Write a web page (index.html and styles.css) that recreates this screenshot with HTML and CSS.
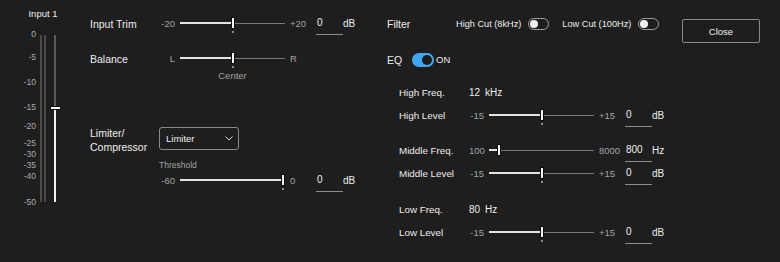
FILE: index.html
```html
<!DOCTYPE html>
<html lang="en">

<head>
    <meta charset="utf-8" />
    <title>Input 1</title>
    <link rel="stylesheet" href="styles.css">
</head>

<body>
    <div class="app">
        <section class="meter">
            <div class="meter-title">Input 1</div>
            <div class="meter-body">
                <div class="meter-scale">
                    <span style="top:-1px">0</span>
                    <span style="top:22px">-5</span>
                    <span style="top:47px">-10</span>
                    <span style="top:72px">-15</span>
                    <span style="top:91px">-20</span>
                    <span style="top:108px">-25</span>
                    <span style="top:119px">-30</span>
                    <span style="top:130px">-35</span>
                    <span style="top:141px">-40</span>
                    <span style="top:167px">-50</span>
                </div>
                <div class="meter-bar"></div>
                <div class="meter-bar"></div>
                <div class="fader">
                    <div class="fader-fill" style="height:56%"></div>
                    <div class="fader-thumb" style="bottom:56%"></div>
                </div>
            </div>
        </section>

        <section class="main">
            <div class="srow">
                <span class="label">Input Trim</span>
                <span class="min">-20</span>
                <div class="slider"><div class="fill" style="width:50%"></div><div class="thumb" style="left:50%"></div></div>
                <span class="max">+20</span>
                <span class="value">0</span>
                <span class="unit">dB</span>
            </div>

            <div class="srow balance">
                <span class="label">Balance</span>
                <span class="min">L</span>
                <div class="slider"><div class="fill" style="width:50%"></div><div class="thumb" style="left:50%"></div></div>
                <span class="max">R</span>
            </div>
            <div class="center-label">Center</div>

            <div class="limiter">
                <span class="label">Limiter/<br>Compressor</span>
                <div class="select">
                    <span>Limiter</span>
                    <svg width="8" height="5" viewBox="0 0 8 5"><path d="M0.5 0.5 L4 4 L7.5 0.5" fill="none" stroke="#d8d8d8" stroke-width="1"/></svg>
                </div>
            </div>
            <div class="threshold">Threshold</div>
            <div class="srow">
                <span class="label"></span>
                <span class="min">-60</span>
                <div class="slider"><div class="fill" style="width:98%"></div><div class="thumb" style="left:98%"></div></div>
                <span class="max">0</span>
                <span class="value">0</span>
                <span class="unit">dB</span>
            </div>
        </section>

        <section class="eq">
            <div class="filter-row">
                <span class="head">Filter</span>
                <span class="sub">High Cut (8kHz)</span>
                <span class="toggle"></span>
                <span class="sub gap">Low Cut (100Hz)</span>
                <span class="toggle"></span>
            </div>

            <div class="eq-row">
                <span class="head eq-head">EQ</span>
                <span class="toggle on"></span>
                <span class="sub on-text">ON</span>
            </div>

            <div class="band high">
                <div class="srow">
                    <span class="label">High Freq.</span>
                    <span class="freq">12</span>
                    <span class="freq-unit">kHz</span>
                </div>
                <div class="srow">
                    <span class="label">High Level</span>
                    <span class="min">-15</span>
                    <div class="slider"><div class="fill" style="width:50%"></div><div class="thumb" style="left:50%"></div></div>
                    <span class="max">+15</span>
                    <span class="value">0</span>
                    <span class="unit">dB</span>
                </div>
            </div>

            <div class="band">
                <div class="srow">
                    <span class="label">Middle Freq.</span>
                    <span class="min">100</span>
                    <div class="slider"><div class="fill" style="width:9.5%"></div><div class="thumb no-dot" style="left:9.5%"></div></div>
                    <span class="max">8000</span>
                    <span class="value">800</span>
                    <span class="unit">Hz</span>
                </div>
                <div class="srow">
                    <span class="label">Middle Level</span>
                    <span class="min">-15</span>
                    <div class="slider"><div class="fill" style="width:50%"></div><div class="thumb" style="left:50%"></div></div>
                    <span class="max">+15</span>
                    <span class="value">0</span>
                    <span class="unit">dB</span>
                </div>
            </div>

            <div class="band low">
                <div class="srow">
                    <span class="label">Low Freq.</span>
                    <span class="freq">80</span>
                    <span class="freq-unit">Hz</span>
                </div>
                <div class="srow">
                    <span class="label">Low Level</span>
                    <span class="min">-15</span>
                    <div class="slider"><div class="fill" style="width:50%"></div><div class="thumb" style="left:50%"></div></div>
                    <span class="max">+15</span>
                    <span class="value">0</span>
                    <span class="unit">dB</span>
                </div>
            </div>
        </section>

        <button class="close">Close</button>
    </div>
</body>

</html>
```

FILE: styles.css
```css
*,
*::before,
*::after {
    margin: 0;
    padding: 0;
    box-sizing: border-box;
}

body {
    background: #1e1e1e;
    color: #ededed;
    font-family: "Liberation Sans", Arial, sans-serif;
    font-size: 10.5px;
}

.app {
    display: flex;
    height: 262px;
}

/* input meter */

.meter {
    width: 80px;
    padding-top: 8px;
}

.meter-title {
    font-size: 9.5px;
    line-height: 12px;
    text-align: center;
    padding-left: 6px;
}

.meter-body {
    display: flex;
    height: 167px;
    margin-top: 15px;
}

.meter-scale {
    position: relative;
    width: 36px;
    font-size: 8.5px;
    color: #ababab;
}

.meter-scale span {
    position: absolute;
    right: 0;
    line-height: 10px;
    transform: translateY(-50%);
}

.meter-bar {
    width: 2px;
    margin-left: 4px;
    background: #4a4a4a;
}

.meter-bar + .meter-bar {
    margin-left: 2px;
}

.fader {
    position: relative;
    width: 11px;
    margin-left: 4px;
}

.fader::before {
    content: "";
    position: absolute;
    left: 4px;
    top: 0;
    bottom: 0;
    width: 2px;
    background: #5c5c5c;
}

.fader-fill {
    position: absolute;
    left: 4px;
    bottom: 0;
    width: 2px;
    background: #f2f2f2;
}

.fader-thumb {
    position: absolute;
    left: 0;
    width: 11px;
    height: 4px;
    margin-bottom: -2px;
    background: #f2f2f2;
    border: 1px solid #111;
}

/* slider rows */

.main {
    width: 307px;
    padding: 12px 0 0 10px;
}

.srow {
    display: grid;
    grid-template-columns: 70px 15px 115px 26px 27px auto;
    align-items: center;
    height: 23px;
}

.label {
    white-space: nowrap;
}

.min {
    text-align: right;
    font-size: 9.5px;
    color: #a3a3a3;
}

.max {
    font-size: 9.5px;
    color: #a3a3a3;
}

.slider {
    position: relative;
    height: 23px;
    margin: 0 5px;
}

.slider::before {
    content: "";
    position: absolute;
    left: 0;
    right: 0;
    top: 11px;
    height: 1px;
    background: #7a7a7a;
}

.fill {
    position: absolute;
    left: 0;
    top: 10px;
    height: 2px;
    background: #e4e4e4;
}

.thumb {
    position: absolute;
    top: 5px;
    width: 4px;
    height: 12px;
    margin-left: -2px;
    background: #f4f4f4;
    border: 1px solid #0c0c0c;
}

.thumb::after {
    content: "";
    position: absolute;
    left: 0;
    top: 13px;
    width: 2px;
    height: 2px;
    background: #8a8a8a;
}

.thumb.no-dot::after {
    display: none;
}

.value {
    height: 23px;
    line-height: 22px;
    font-size: 10px;
    border-bottom: 1px solid #8c8c8c;
    padding-left: 1px;
}

.unit {
    font-size: 10px;
}

.balance {
    margin-top: 12px;
}

.center-label {
    margin-left: 90px;
    width: 105px;
    text-align: center;
    font-size: 9.5px;
    line-height: 11px;
    color: #a3a3a3;
}

.limiter {
    display: flex;
    margin-top: 45px;
}

.limiter .label {
    width: 69px;
    line-height: 14px;
}

.select {
    display: flex;
    align-items: center;
    justify-content: space-between;
    width: 80px;
    height: 23px;
    margin-top: 1px;
    padding: 0 5px 0 6px;
    border: 1px solid #8a8a8a;
    border-radius: 3px;
    font-size: 9.5px;
}

.threshold {
    margin: 6px 0 0 69px;
    font-size: 8.5px;
    line-height: 10px;
    color: #a3a3a3;
}

.threshold + .srow {
    margin-top: -1px;
}

/* filter / eq */

.eq {
    width: 295px;
    padding-top: 12px;
}

.filter-row,
.eq-row {
    display: flex;
    align-items: center;
    height: 23px;
}

.head {
    width: 69px;
}

.sub {
    font-size: 9.2px;
}

.sub.gap {
    margin-left: 13px;
}

.toggle {
    position: relative;
    width: 21px;
    height: 12px;
    margin-left: 7px;
    border: 1px solid #9a9a9a;
    border-radius: 6px;
}

.toggle::after {
    content: "";
    position: absolute;
    left: 1px;
    top: 1px;
    width: 8px;
    height: 8px;
    border-radius: 50%;
    background: #f0f0f0;
}

.eq-row {
    margin-top: 13px;
}

.eq-head {
    width: 25px;
}

.toggle.on {
    width: 22px;
    height: 14px;
    margin-left: 0;
    border: none;
    border-radius: 7px;
    background: #41a8f0;
}

.toggle.on::after {
    left: 10px;
    top: 2px;
    width: 10px;
    height: 10px;
    background: #1a1a1a;
}

.on-text {
    margin-left: 2px;
    font-size: 9.5px;
}

.band {
    margin-top: 12px;
    padding-left: 12px;
}

.band.high {
    margin-top: 10px;
}

.band.low {
    margin-top: 13px;
}

.band .label {
    font-size: 9.8px;
}

.freq {
    font-size: 10px;
}

.freq-unit {
    font-size: 10px;
    padding-left: 1px;
}

.close {
    width: 78px;
    height: 24px;
    margin-top: 19px;
    background: #1e1e1e;
    color: #ededed;
    border: 1px solid #8a8a8a;
    border-radius: 2px;
    font-family: inherit;
    font-size: 9.5px;
}
```
